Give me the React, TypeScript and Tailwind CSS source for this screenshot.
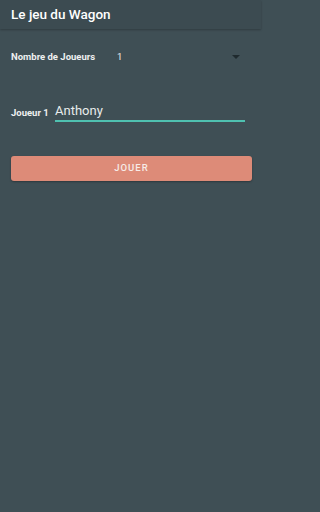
import React from "react";

export default function App() {
  return (
    <div className="w-full min-h-screen bg-[#3f4f55]">
      <div className="w-[261px] h-[512px] bg-[#3f4f55] text-white flex flex-col" style={{ fontFamily: "Roboto, 'Liberation Sans', sans-serif" }}>
        <div className="h-[29px] bg-[#3c4b51] shadow-[0_1px_2px_rgba(0,0,0,0.25)] flex items-center px-[11px]">
          <span className="text-[13.5px] font-medium text-white leading-none">Le jeu du Wagon</span>
        </div>
        <div className="flex flex-col pl-[11px] pr-[9px]">
          <div className="flex items-center h-[20px] mt-[18px]">
            <span className="text-[9.5px] font-bold w-[106px] text-[#eef0f0]">Nombre de Joueurs</span>
            <span className="text-[9.5px] text-[#eef0f0] flex-1">1</span>
            <svg width="8" height="4" viewBox="0 0 8 4" className="mr-[12px]">
              <path d="M0 0 L8 0 L4 4 Z" fill="#1f2a2e" />
            </svg>
          </div>
          <div className="flex items-end mt-[35px] h-[20px]">
            <span className="text-[9.5px] font-bold text-[#eef0f0] w-[44px] leading-none pb-[5px]">Joueur 1</span>
            <div className="flex-1 mr-[7px] h-[19px] flex items-end border-b-2 border-b-[#4fc1b0]">
              <span className="text-[13px] text-[#e8ecec] leading-none pb-[3px]">Anthony</span>
            </div>
          </div>
          <button className="mt-[34px] h-[25px] rounded-[3px] bg-[#dd8b78] shadow-[0_1px_2px_rgba(0,0,0,0.3)] text-[9.5px] font-medium tracking-[1px] text-[#f7ece8]">
            JOUER
          </button>
        </div>
      </div>
    </div>
  );
}
